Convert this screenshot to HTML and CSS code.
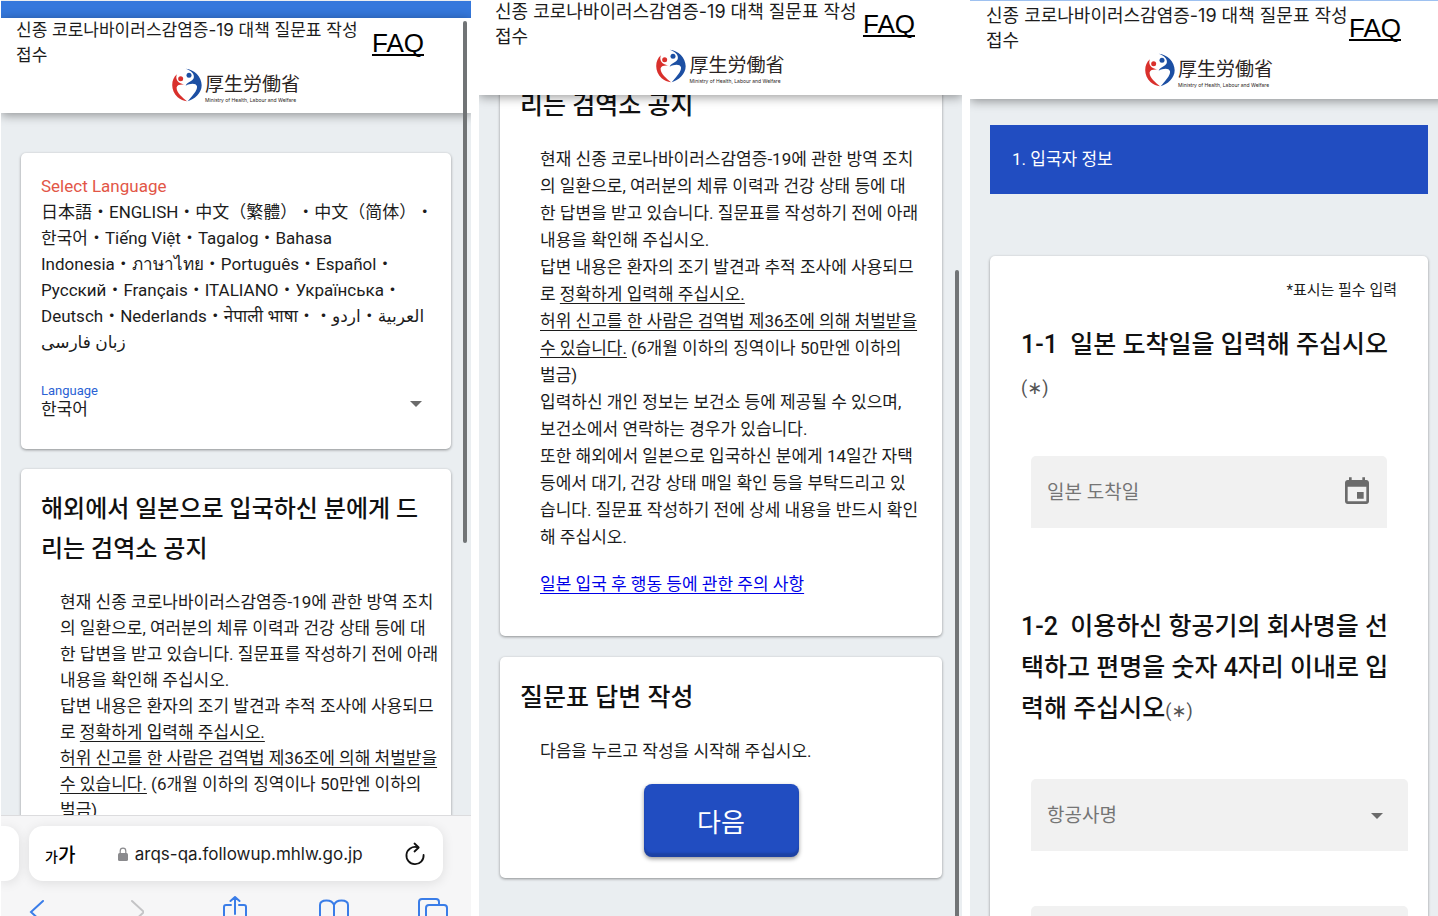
FILE: index.html
```html
<!DOCTYPE html>
<html lang="ko">
<head>
    <meta charset="UTF-8">
    <meta name="viewport" content="width=device-width, initial-scale=1.0">
    <title>신종 코로나바이러스감염증-19 대책 질문표 작성 접수</title>
    <link rel="stylesheet" href="styles.css">
</head>
<body>
    <!-- Logo mark, reused in each header -->
    <svg class="defs" aria-hidden="true">
        <symbol id="mark" viewBox="0 0 90 98">
            <g fill="#d9302c">
                <circle cx="26" cy="30" r="7.5"/>
                <path d="M15 17C-4 32-5 66 17 86c8 7 18 11 28 12C30 86 12 70 14 56c2-8 12-9 24-8-8-4-18-5-22-12-4-7-4-13-1-19z"/>
            </g>
            <g fill="#1c4fa3">
                <circle cx="51" cy="20" r="7.5"/>
                <path d="M41 0c26 2 48 24 48 50 0 24-22 42-42 48 12-14 30-32 28-45-3-11-21-9-34-2 5-12 20-12 24-22C69 17 58 5 41 0z"/>
            </g>
        </symbol>
    </svg>

    <main class="screens">
        <!-- Start page -->
        <section class="phone phone-start">
            <div class="status-bar"></div>
            <header class="header">
                <div class="header-row">
                    <p class="header-title">신종 코로나바이러스감염증-19 대책 질문표 작성<br>접수</p>
                    <a class="faq" href="#">FAQ</a>
                </div>
                <div class="logo">
                    <svg class="logo-mark"><use href="#mark"/></svg>
                    <div class="logo-text">
                        <span class="logo-name" lang="ja">厚生労働省</span>
                        <span class="logo-sub" lang="en">Ministry of Health, Labour and Welfare</span>
                    </div>
                </div>
            </header>
            <div class="content">
                <div class="card language-card">
                    <h3 class="select-language">Select Language</h3>
                    <p class="languages">
                        日本語・ENGLISH・中文（繁體）・中文（简体）・<br>
                        한국어・Tiếng Việt・Tagalog・Bahasa<br>
                        Indonesia・ภาษาไทย・Português・Español・<br>
                        Русский・Français・ITALIANO・Українська・<br>
                        Deutsch・Nederlands・नेपाली भाषा・<span dir="rtl">العربية・اردو・</span><br>
                        <span dir="rtl">زبان فارسی</span>
                    </p>
                    <div class="language-field">
                        <label for="language">Language</label>
                        <select id="language">
                            <option>한국어</option>
                        </select>
                        <span class="arrow"></span>
                    </div>
                </div>
                <div class="card">
                    <h2>해외에서 일본으로 입국하신 분에게 드<br>리는 검역소 공지</h2>
                    <p class="text">
                        현재 신종 코로나바이러스감염증-19에 관한 방역 조치<br>
                        의 일환으로, 여러분의 체류 이력과 건강 상태 등에 대<br>
                        한 답변을 받고 있습니다. 질문표를 작성하기 전에 아래<br>
                        내용을 확인해 주십시오.<br>
                        답변 내용은 환자의 조기 발견과 추적 조사에 사용되므<br>
                        로 <u>정확하게 입력해 주십시오.</u><br>
                        <u>허위 신고를 한 사람은 검역법 제36조에 의해 처벌받을</u><br>
                        <u>수 있습니다.</u> (6개월 이하의 징역이나 50만엔 이하의<br>
                        벌금)
                    </p>
                </div>
            </div>
            <div class="scrollbar"></div>

            <!-- Browser bar -->
            <footer class="browser">
                <div class="tabs">
                    <div class="tab-previous"></div>
                    <div class="address">
                        <button class="text-size" type="button"><small>가</small>가</button>
                        <span class="url">
                            <svg width="10" height="14" viewBox="0 0 10 14">
                                <path d="M2.2 7V4a2.8 2.8 0 0 1 5.6 0v3" fill="none" stroke="#8a8a8d" stroke-width="1.2"/>
                                <rect y="6" width="10" height="8" rx="1.5" fill="#8a8a8d"/>
                            </svg>
                            arqs-qa.followup.mhlw.go.jp
                        </span>
                        <button class="icon-button" type="button" aria-label="새로 고침">
                            <svg width="20" height="24" viewBox="0 0 20 24" fill="none" stroke="#111" stroke-width="1.8" stroke-linecap="round" stroke-linejoin="round">
                                <path d="M12 5.2A8.6 8.6 0 1 0 18.6 13"/>
                                <path d="M9.5 1.5l4.2 4-4.2 4"/>
                            </svg>
                        </button>
                    </div>
                </div>
                <nav class="toolbar">
                    <button class="icon-button" type="button" aria-label="뒤로">
                        <svg width="16" height="30" viewBox="0 0 16 30" fill="none" stroke="#3a7de8" stroke-width="2" stroke-linecap="round"><path d="M14 5L2 16l12 11"/></svg>
                    </button>
                    <button class="icon-button" type="button" aria-label="앞으로">
                        <svg width="16" height="30" viewBox="0 0 16 30" fill="none" stroke="#c4c4c6" stroke-width="2" stroke-linecap="round"><path d="M4 5l12 11L4 27"/></svg>
                    </button>
                    <button class="icon-button" type="button" aria-label="공유">
                        <svg width="26" height="30" viewBox="0 0 26 30" fill="none" stroke="#3a7de8" stroke-width="2" stroke-linecap="round" stroke-linejoin="round"><path d="M13 18V1M8.5 5L13 1l4.500 4M9 9H4a2 2 0 0 0-2 2v14h22V11a2 2 0 0 0-2-2h-5"/></svg>
                    </button>
                    <button class="icon-button" type="button" aria-label="책갈피">
                        <svg width="32" height="30" viewBox="0 0 32 30" fill="none" stroke="#3a7de8" stroke-width="2" stroke-linejoin="round"><path d="M16 28V9c-1-3-4-4.500-7.500-4.500S2 6 2 9v19M16 9c1-3 4-4.500 7.500-4.500S30 6 30 9v19"/></svg>
                    </button>
                    <button class="icon-button" type="button" aria-label="탭">
                        <svg width="30" height="30" viewBox="0 0 30 30" fill="none" stroke="#3a7de8" stroke-width="2"><path d="M8 23H4a3 3 0 0 1-3-3V6a3 3 0 0 1 3-3h14a3 3 0 0 1 3 3v3"/><rect x="8" y="9" width="21" height="20" rx="3"/></svg>
                    </button>
                </nav>
            </footer>
        </section>

        <!-- Start page, scrolled to the end -->
        <section class="phone phone-scrolled">
            <header class="header">
                <div class="header-row">
                    <p class="header-title">신종 코로나바이러스감염증-19 대책 질문표 작성<br>접수</p>
                    <a class="faq" href="#">FAQ</a>
                </div>
                <div class="logo">
                    <svg class="logo-mark"><use href="#mark"/></svg>
                    <div class="logo-text">
                        <span class="logo-name" lang="ja">厚生労働省</span>
                        <span class="logo-sub" lang="en">Ministry of Health, Labour and Welfare</span>
                    </div>
                </div>
            </header>
            <div class="content">
                <div class="card notice-card">
                    <h2>리는 검역소 공지</h2>
                    <p class="text">
                        현재 신종 코로나바이러스감염증-19에 관한 방역 조치<br>
                        의 일환으로, 여러분의 체류 이력과 건강 상태 등에 대<br>
                        한 답변을 받고 있습니다. 질문표를 작성하기 전에 아래<br>
                        내용을 확인해 주십시오.<br>
                        답변 내용은 환자의 조기 발견과 추적 조사에 사용되므<br>
                        로 <u>정확하게 입력해 주십시오.</u><br>
                        <u>허위 신고를 한 사람은 검역법 제36조에 의해 처벌받을</u><br>
                        <u>수 있습니다.</u> (6개월 이하의 징역이나 50만엔 이하의<br>
                        벌금)<br>
                        입력하신 개인 정보는 보건소 등에 제공될 수 있으며,<br>
                        보건소에서 연락하는 경우가 있습니다.<br>
                        또한 해외에서 일본으로 입국하신 분에게 14일간 자택<br>
                        등에서 대기, 건강 상태 매일 확인 등을 부탁드리고 있<br>
                        습니다. 질문표 작성하기 전에 상세 내용을 반드시 확인<br>
                        해 주십시오.
                    </p>
                    <p class="text"><a href="#">일본 입국 후 행동 등에 관한 주의 사항</a></p>
                </div>
                <div class="card">
                    <h2>질문표 답변 작성</h2>
                    <p class="text">다음을 누르고 작성을 시작해 주십시오.</p>
                    <button class="next" type="button">다음</button>
                </div>
            </div>
            <div class="scrollbar"></div>
        </section>

        <!-- Questionnaire -->
        <section class="phone phone-form">
            <div class="sheet">
                <header class="header">
                    <div class="header-row">
                        <p class="header-title">신종 코로나바이러스감염증-19 대책 질문표 작성<br>접수</p>
                        <a class="faq" href="#">FAQ</a>
                    </div>
                    <div class="logo">
                        <svg class="logo-mark"><use href="#mark"/></svg>
                        <div class="logo-text">
                            <span class="logo-name" lang="ja">厚生労働省</span>
                            <span class="logo-sub" lang="en">Ministry of Health, Labour and Welfare</span>
                        </div>
                    </div>
                </header>
                <div class="content">
                    <h1 class="step">1. 입국자 정보</h1>
                    <form class="card form-card">
                        <p class="required-note">*표시는 필수 입력</p>
                        <h2><label for="arrival">1-1&nbsp; 일본 도착일을 입력해 주십시오<br><span class="mark">(∗)</span></label></h2>
                        <div class="field field-date">
                            <input id="arrival" type="text" placeholder="일본 도착일">
                            <button class="icon-button" type="button" aria-label="날짜 선택">
                                <svg width="32" height="32" viewBox="0 0 24 24" fill="#6b6b6b"><path d="M17 12h-5v5h5v-5zM16 1v2H8V1H6v2H5c-1.110 0-1.990.9-1.990 2L3 19c0 1.100.89 2 2 2h14c1.100 0 2-.9 2-2V5c0-1.100-.9-2-2-2h-1V1h-2zm3 18H5V8h14v11z"/></svg>
                            </button>
                        </div>
                        <h2><label for="airline">1-2&nbsp; 이용하신 항공기의 회사명을 선<br>택하고 편명을 숫자 4자리 이내로 입<br>력해 주십시오<span class="mark">(∗)</span></label></h2>
                        <div class="field">
                            <select id="airline">
                                <option>항공사명</option>
                            </select>
                            <span class="arrow"></span>
                        </div>
                        <div class="field">
                            <input type="text" aria-label="편명">
                        </div>
                    </form>
                </div>
            </div>
        </section>
    </main>
</body>
</html>
```
FILE: styles.css
```css
* {
    box-sizing: border-box;
}

body {
    margin: 0;
    background: #fff;
    color: #1c1c1c;
    font-family: Roboto, "Noto Sans CJK KR", "Noto Sans", "DejaVu Sans", sans-serif;
    font-size: 17px;
    overflow: hidden;
}

h1, h2, h3, p {
    margin: 0;
}

button, input, select {
    border: 0;
    margin: 0;
    padding: 0;
    background: none;
    color: inherit;
    font: inherit;
}

select {
    appearance: none;
}

.defs {
    display: none;
}

.screens {
    display: grid;
    grid-template-columns: 470fr 483fr 468fr;
    gap: 8px;
    height: 100vh;
    padding-left: 1px;
}

.phone {
    position: relative;
    display: flex;
    flex-direction: column;
    min-width: 0;
    overflow: hidden;
    background: #eaeef1;
    white-space: nowrap;
}

.phone-start {
    padding-top: 1px;
}

.status-bar {
    flex: none;
    height: 17px;
    background: #3578dc;
}

/* Header */
.header {
    position: relative;
    z-index: 2;
    flex: none;
    padding: 2px 0 11px;
    background: #fff;
    box-shadow: 0 2px 10px rgba(0, 0, 0, 0.4);
}

.header-row {
    display: flex;
    align-items: center;
    justify-content: space-between;
    padding: 0 47px 0 16px;
}

.header-title {
    font-family: Inter, "Noto Sans CJK KR", sans-serif;
    font-size: 18px;
    line-height: 25px;
}

.faq {
    color: #000;
    font-family: "Liberation Sans", sans-serif;
    font-size: 26px;
    line-height: 30px;
    text-underline-offset: 2px;
    text-decoration-thickness: 2px;
    text-decoration-skip-ink: none;
}

.phone-start .header {
    padding: 0 0 10px;
}

.phone-start .header-row {
    padding-left: 15px;
}

.phone-start .header-title {
    font-size: 17px;
}

.logo {
    display: flex;
    justify-content: center;
    gap: 3px;
}

.logo-mark {
    width: 30px;
    height: 34px;
}

.logo-text {
    display: flex;
    flex-direction: column;
    padding-top: 1px;
    color: #2b2423;
}

.logo-name {
    font-family: "Noto Sans CJK JP", sans-serif;
    font-size: 19px;
    line-height: 28px;
}

.logo-sub {
    font-family: Inter, sans-serif;
    font-size: 5px;
    line-height: 6px;
}

/* Cards */
.content {
    flex: 1;
    display: flex;
    flex-direction: column;
    gap: 20px;
    min-height: 0;
    padding: 40px 20px 0;
}

.card {
    flex: none;
    padding: 20px;
    border-radius: 5px;
    background: #fff;
    box-shadow: 0 1px 3px rgba(0, 0, 0, 0.4);
}

h2 {
    color: #111;
    font-size: 25px;
    font-weight: 500;
    line-height: 41px;
}

.text {
    margin: 20px 20px 0;
    line-height: 27px;
}

.text a {
    color: #0000e8;
}

.text u, .text a {
    text-underline-offset: 3px;
    text-decoration-skip-ink: none;
}

.phone-start h2 {
    font-size: 24px;
    line-height: 40px;
}

.phone-start .text {
    margin: 20px 0 0 19px;
    line-height: 26px;
}

.language-card {
    padding-bottom: 30px;
}

.select-language {
    color: #e25647;
    font-size: 17px;
    font-weight: 400;
    line-height: 26px;
}

.languages {
    line-height: 26px;
    text-spacing-trim: space-all;
}

.language-field {
    position: relative;
    display: flex;
    flex-direction: column;
    margin-top: 28px;
}

.language-field label {
    color: #2a62d4;
    font-size: 13px;
    line-height: 16px;
}

.language-field select {
    height: 20px;
    line-height: 20px;
}

.arrow {
    position: absolute;
    top: 50%;
    right: 9px;
    border: 6px solid transparent;
    border-top-color: #6b6b6b;
    border-bottom: 0;
    pointer-events: none;
}

/* Scrollbar thumbs */
.scrollbar {
    position: absolute;
    z-index: 3;
    top: 21px;
    right: 4px;
    width: 4px;
    height: 57vh;
    border-radius: 2px;
    background: #717476;
}

.phone-scrolled .scrollbar {
    top: 270px;
    right: 3px;
    height: 100vh;
}

/* Browser bar */
.browser {
    position: relative;
    z-index: 4;
    flex: none;
    height: 101px;
    overflow: hidden;
    border-top: 1px solid #dcdcde;
    background: #f6f6f7;
}

.tabs {
    display: flex;
    gap: 10px;
    padding: 10px 28px 0 0;
}

.tab-previous, .address {
    height: 55px;
    background: #fff;
    box-shadow: 0 2px 12px rgba(0, 0, 0, 0.1);
}

.tab-previous {
    flex: none;
    width: 18px;
    border-radius: 0 14px 14px 0;
}

.address {
    flex: 1;
    display: flex;
    align-items: center;
    justify-content: space-between;
    padding: 0 18px 0 16px;
    border-radius: 14px;
}

.text-size {
    color: #000;
    font-size: 19px;
    font-weight: 500;
}

.text-size small {
    font-size: 14px;
}

.url {
    display: flex;
    align-items: center;
    gap: 7px;
    font-family: Inter, sans-serif;
}

.icon-button {
    display: flex;
    justify-content: center;
}

.toolbar {
    display: flex;
    justify-content: space-between;
    padding: 15px 22px 0 20px;
}

.toolbar .icon-button {
    width: 32px;
}

/* Scrolled page */
.phone-scrolled .header {
    margin-top: -3px;
}

.phone-scrolled .content {
    padding: 0 20px 0 21px;
}

.phone-scrolled .content,
.phone-form .content {
    gap: 21px;
}

.notice-card {
    margin-top: -30px;
    padding-bottom: 38px;
}

.phone-scrolled h2 {
    line-height: 41px;
}

.next {
    display: block;
    width: 155px;
    height: 73px;
    margin: 19px auto 1px;
    border-radius: 8px;
    background: #214dc1;
    box-shadow: 0 2px 4px rgba(0, 0, 0, 0.4), inset 0 -4px 2px rgba(0, 0, 0, 0.15);
    color: #fff;
    font-size: 26px;
}

/* Questionnaire */
.phone-form {
    border-top: 1px solid #9ec1f0;
}

.sheet {
    flex: 1;
    display: flex;
    flex-direction: column;
    min-height: 0;
    margin-right: -10px;
}

.phone-form .content {
    padding-top: 26px;
}

.step {
    flex: none;
    margin-bottom: 41px;
    padding: 20px 22px;
    background: #214dc1;
    color: #fff;
    font-size: 17px;
    font-weight: 400;
    line-height: 29px;
}

.form-card {
    padding: 21px 31px;
}

.form-card h2 {
    margin-top: 20px;
}

.required-note {
    font-size: 15px;
    line-height: 27px;
    text-align: right;
}

.mark {
    color: #555;
    font-size: 18px;
    font-weight: 400;
}

.field {
    position: relative;
    display: flex;
    align-items: center;
    justify-content: space-between;
    height: 72px;
    margin: 48px -11px 55px 10px;
    padding: 0 16px;
    border-radius: 5px 5px 0 0;
    background: #f1f1f1;
    color: #757575;
    font-size: 19px;
}

.field + .field {
    margin-top: 0;
}

.field input, .field select {
    flex: 1;
    min-width: 0;
    height: 100%;
}

.field input::placeholder {
    color: #757575;
    opacity: 1;
}

.field-date {
    margin: 48px 10px 78px;
    padding-right: 14px;
}

.field .arrow {
    right: 25px;
    margin-top: -2px;
}
```
